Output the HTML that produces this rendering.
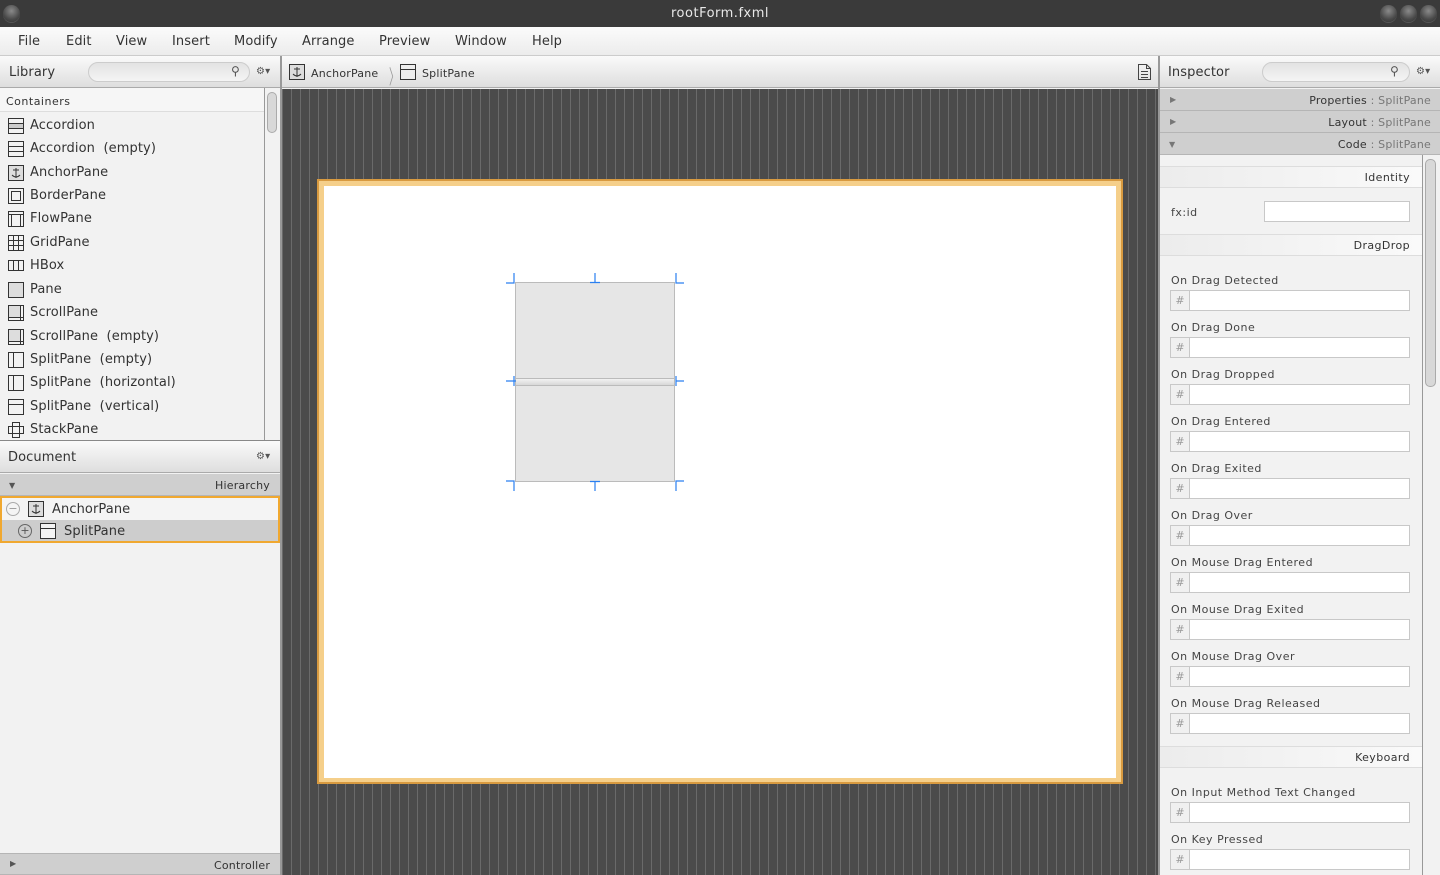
<!DOCTYPE html>
<html><head><meta charset="utf-8"><style>
*{box-sizing:border-box;margin:0;padding:0}
body{width:1440px;height:875px;overflow:hidden;background:#f2f2f2;font-family:"DejaVu Sans","Liberation Sans",sans-serif;font-size:12px;color:#333;position:relative}
.a{position:absolute}
.t{position:absolute;white-space:nowrap;letter-spacing:0.2px;margin-top:2px}
.hdr{background:linear-gradient(#fafafa,#dedede);border-bottom:1px solid #aaa}
.bar{background:#cfcfcf;border-bottom:1px solid #b5b5b5}
.search{position:absolute;height:20px;border:1px solid #ccc;border-radius:10px;background:linear-gradient(#e2e2e2,#f4f4f4)}
.inp{position:absolute;background:#fff;border:1px solid #c8c8c8}
.lbl{position:absolute;left:1171px;font-size:11px;letter-spacing:0.5px;color:#444;margin-top:1px}
.hs{position:absolute;left:1170px;width:240px;height:21px;border:1px solid #c8c8c8;background:#fff}
.hs:before{content:"#";position:absolute;left:0;top:0;width:18px;height:19px;background:#f0f0f0;border-right:1px solid #c8c8c8;color:#999;font-size:11px;text-align:center;line-height:19px}
.sec{position:absolute;left:1160px;width:262px;height:22px;background:linear-gradient(90deg,#ececec,#fafafa);border-top:1px solid #ddd;border-bottom:1px solid #ddd;text-align:right;padding-right:12px;line-height:22px;font-size:11px;letter-spacing:0.4px}
.wb{position:absolute;top:5px;width:17px;height:17px;border-radius:50%;background:radial-gradient(circle at 50% 35%,#8a8a8a,#4a4a4a 60%,#2e2e2e);box-shadow:0 1px 0 #555}
.li{font-size:13px;letter-spacing:0.1px}
</style></head><body>
<div class="a" style="left:0;top:0;width:1440px;height:27px;background:#3a3a3a"></div>
<div class="wb" style="left:3px"></div>
<div class="wb" style="left:1380px"></div>
<div class="wb" style="left:1400px"></div>
<div class="wb" style="left:1420px"></div>
<div class="t" style="left:0;width:1440px;top:4px;text-align:center;color:#e8e8e8;font-size:13px;letter-spacing:0.5px">rootForm.fxml</div>
<div class="a" style="left:0;top:27px;width:1440px;height:29px;background:linear-gradient(#fbfbfb,#ececec);border-bottom:1px solid #ccc"></div>
<div class="t li" style="left:18px;top:32px">File</div>
<div class="t li" style="left:66px;top:32px">Edit</div>
<div class="t li" style="left:116px;top:32px">View</div>
<div class="t li" style="left:172px;top:32px">Insert</div>
<div class="t li" style="left:234px;top:32px">Modify</div>
<div class="t li" style="left:302px;top:32px">Arrange</div>
<div class="t li" style="left:379px;top:32px">Preview</div>
<div class="t li" style="left:455px;top:32px">Window</div>
<div class="t li" style="left:532px;top:32px">Help</div>

<div class="a hdr" style="left:0;top:56px;width:281px;height:32px"></div>
<div class="t li" style="left:9px;top:63px">Library</div>
<div class="search" style="left:88px;top:62px;width:162px"></div>
<div class="t" style="left:231px;top:62px;font-size:12px;color:#555">&#9906;</div>
<div class="t" style="left:256px;top:64px;font-size:10px;color:#555">&#9881;&#9662;</div>
<div class="a" style="left:0;top:88px;width:264px;height:24px;background:#f6f6f6;border-bottom:1px solid #ddd"></div>
<div class="t" style="left:6px;top:93px;font-size:11px;letter-spacing:0.5px">Containers</div>
<div class="a" style="left:264px;top:88px;width:17px;height:352px;background:#f2f2f2;border-left:1px solid #999"></div>
<div class="a" style="left:267px;top:92px;width:10px;height:41px;border-radius:5px;background:#d8d8d8;border:1px solid #aaa"></div>
<svg class="a" style="left:0;top:113px" width="264" height="328" fill="none" stroke="#333" stroke-width="1">
<g transform="translate(8,5)"><rect x=".5" y=".5" width="15" height="15"/><path d="M1 5.5h14M1 10.5h14"/><rect x="1" y="6" width="14" height="4" fill="#ccc" stroke="none"/></g>
<g transform="translate(8,28)"><rect x=".5" y=".5" width="15" height="15"/><path d="M1 5.5h14M1 10.5h14"/></g>
<g transform="translate(8,52)"><rect x=".5" y=".5" width="15" height="15" fill="#ddd"/><path d="M8 3v10M5 5h6M4 10q4 4 8 0"/></g>
<g transform="translate(8,75)"><rect x=".5" y=".5" width="15" height="15"/><rect x="3.5" y="3.5" width="9" height="9"/></g>
<g transform="translate(8,98)"><rect x=".5" y=".5" width="15" height="15"/><path d="M1 3.5h14M3.5 4v11M12.5 4v11"/></g>
<g transform="translate(8,122)"><rect x=".5" y=".5" width="15" height="15"/><path d="M5.5 1v14M10.5 1v14M1 5.5h14M1 10.5h14"/></g>
<g transform="translate(8,145)"><rect x=".5" y="2.5" width="15" height="10"/><path d="M5.5 3v9M10.5 3v9"/></g>
<g transform="translate(8,169)"><rect x=".5" y=".5" width="15" height="15" fill="#ddd"/></g>
<g transform="translate(8,192)"><rect x=".5" y=".5" width="15" height="15"/><rect x="1" y="1" width="11" height="11" fill="#ddd" stroke="none"/><path d="M12.5 1v14M1 12.5h14"/></g>
<g transform="translate(8,216)"><rect x=".5" y=".5" width="15" height="15"/><rect x="1" y="1" width="11" height="11" fill="#ddd" stroke="none"/><path d="M12.5 1v14M1 12.5h14"/></g>
<g transform="translate(8,239)"><rect x=".5" y=".5" width="15" height="15"/><path d="M5.5 1v14"/></g>
<g transform="translate(8,262)"><rect x=".5" y=".5" width="15" height="15"/><path d="M5.5 1v14"/></g>
<g transform="translate(8,286)"><rect x=".5" y=".5" width="15" height="15"/><path d="M1 5.5h14"/></g>
<g transform="translate(8,309)"><rect x="4.5" y=".5" width="7" height="15"/><rect x=".5" y="4.5" width="15" height="7"/></g>
</svg>
<div class="t li" style="left:30px;top:116px">Accordion</div>
<div class="t li" style="left:30px;top:139px">Accordion &nbsp;(empty)</div>
<div class="t li" style="left:30px;top:163px">AnchorPane</div>
<div class="t li" style="left:30px;top:186px">BorderPane</div>
<div class="t li" style="left:30px;top:209px">FlowPane</div>
<div class="t li" style="left:30px;top:233px">GridPane</div>
<div class="t li" style="left:30px;top:256px">HBox</div>
<div class="t li" style="left:30px;top:280px">Pane</div>
<div class="t li" style="left:30px;top:303px">ScrollPane</div>
<div class="t li" style="left:30px;top:327px">ScrollPane &nbsp;(empty)</div>
<div class="t li" style="left:30px;top:350px">SplitPane &nbsp;(empty)</div>
<div class="t li" style="left:30px;top:373px">SplitPane &nbsp;(horizontal)</div>
<div class="t li" style="left:30px;top:397px">SplitPane &nbsp;(vertical)</div>
<div class="t li" style="left:30px;top:420px">StackPane</div>

<div class="a hdr" style="left:0;top:440px;width:281px;height:33px;border-top:1px solid #888"></div>
<div class="t li" style="left:8px;top:448px">Document</div>
<div class="t" style="left:256px;top:449px;font-size:10px;color:#555">&#9881;&#9662;</div>
<div class="a bar" style="left:0;top:474px;width:281px;height:22px"></div>
<div class="t" style="left:9px;top:479px;font-size:8px;color:#555">&#9660;</div>
<div class="t" style="left:215px;top:477px;font-size:11px">Hierarchy</div>
<div class="a" style="left:0;top:496px;width:280px;height:47px;border:2px solid #f0a830;background:#f4f4f4"></div>
<div class="a" style="left:2px;top:520px;width:276px;height:21px;background:#cdcdcd"></div>
<div class="a" style="left:6px;top:502px;width:14px;height:14px;border:1px solid #aaa;border-radius:50%;text-align:center;line-height:11px;color:#999;font-size:11px">−</div>
<div class="a" style="left:18px;top:524px;width:14px;height:14px;border:1px solid #666;border-radius:50%;text-align:center;line-height:11px;color:#555;font-size:11px">+</div>
<svg class="a" style="left:28px;top:501px" width="16" height="16" fill="none" stroke="#333"><rect x=".5" y=".5" width="15" height="15" fill="#ddd"/><path d="M8 3v10M5 5h6M4 10q4 4 8 0"/></svg>
<svg class="a" style="left:40px;top:523px" width="16" height="16" fill="none" stroke="#333"><rect x=".5" y=".5" width="15" height="15" fill="#f4f4f4"/><path d="M1 5.5h14"/></svg>
<div class="t li" style="left:52px;top:500px">AnchorPane</div>
<div class="t li" style="left:64px;top:522px">SplitPane</div>
<div class="a bar" style="left:0;top:853px;width:281px;height:22px;border-top:1px solid #b5b5b5"></div>
<div class="t" style="left:10px;top:857px;font-size:8px;color:#555">&#9654;</div>
<div class="t" style="left:214px;top:857px;font-size:11px">Controller</div>
<div class="a" style="left:280px;top:56px;width:2px;height:819px;background:#999"></div>

<div class="a hdr" style="left:282px;top:56px;width:877px;height:32px"></div>
<svg class="a" style="left:289px;top:64px" width="16" height="16" fill="none" stroke="#333"><rect x=".5" y=".5" width="15" height="15" fill="#ddd"/><path d="M8 3v10M5 5h6M4 10q4 4 8 0"/></svg>
<div class="t" style="left:311px;top:65px;font-size:11px">AnchorPane</div>
<div class="t" style="left:384px;top:59px;font-size:20px;color:#999;transform:scaleX(.5)">〉</div>
<svg class="a" style="left:400px;top:64px" width="16" height="16" fill="none" stroke="#333"><rect x=".5" y=".5" width="15" height="15" fill="#eee"/><path d="M1 5.5h14"/></svg>
<div class="t" style="left:422px;top:65px;font-size:11px">SplitPane</div>
<svg class="a" style="left:1136px;top:64px" width="16" height="17" fill="none" stroke="#444"><path d="M2.5 .5h8l4 4v11h-12z M10.5 .5v4h4 M5 7.5h7M5 10.5h7M5 13.5h7"/></svg>
<div class="a" style="left:282px;top:89px;width:877px;height:786px;background-color:#4b4b4b;background-image:repeating-linear-gradient(90deg,#6a6a6a 0 1px,transparent 1px 9px)"></div>
<div class="a" style="left:317px;top:179px;width:806px;height:605px;background:#f5cf8a;border:2px solid #d89a40"></div>
<div class="a" style="left:324px;top:186px;width:792px;height:592px;background:#fff"></div>
<div class="a" style="left:515px;top:282px;width:160px;height:200px;background:#e6e6e6;border:1px solid #bbb"></div>
<div class="a" style="left:515px;top:378px;width:160px;height:8px;background:linear-gradient(#f2f2f2,#d8d8d8);border:1px solid #bbb"></div>
<svg class="a" style="left:504px;top:271px" width="182" height="222" stroke="#2a7ff0" stroke-width="1.2" fill="none">
<path d="M10 2v10H2M172 2v10h8M10 220v-10H2M172 220v-10h8M91 2v10M86 11.5h10M91 220v-10M86 210.5h10M2 110h10M10 105v10M180 110h-8M172 105v10"/>
</svg>
<div class="a" style="left:1158px;top:56px;width:2px;height:819px;background:#999"></div>

<div class="a hdr" style="left:1160px;top:56px;width:280px;height:32px"></div>
<div class="t li" style="left:1168px;top:63px">Inspector</div>
<div class="search" style="left:1262px;top:62px;width:148px"></div>
<div class="t" style="left:1390px;top:62px;font-size:12px;color:#555">&#9906;</div>
<div class="t" style="left:1416px;top:64px;font-size:10px;color:#555">&#9881;&#9662;</div>
<div class="a bar" style="left:1160px;top:89px;width:280px;height:22px"></div>
<div class="a bar" style="left:1160px;top:111px;width:280px;height:22px"></div>
<div class="a bar" style="left:1160px;top:133px;width:280px;height:22px"></div>
<div class="t" style="left:1170px;top:93px;font-size:8px;color:#777">&#9654;</div>
<div class="t" style="left:1170px;top:115px;font-size:8px;color:#777">&#9654;</div>
<div class="t" style="left:1169px;top:138px;font-size:8px;color:#777">&#9660;</div>
<div class="t" style="right:9px;top:92px;font-size:11px">Properties <span style="color:#777">: SplitPane</span></div>
<div class="t" style="right:9px;top:114px;font-size:11px">Layout <span style="color:#777">: SplitPane</span></div>
<div class="t" style="right:9px;top:136px;font-size:11px">Code <span style="color:#777">: SplitPane</span></div>
<div class="a" style="left:1422px;top:155px;width:18px;height:720px;background:#f2f2f2;border-left:1px solid #999"></div>
<div class="a" style="left:1425px;top:159px;width:11px;height:228px;border-radius:5px;background:#d8d8d8;border:1px solid #aaa"></div>
<div class="sec" style="top:166px">Identity</div>
<div class="lbl" style="top:205px">fx:id</div>
<div class="inp" style="left:1264px;top:201px;width:146px;height:21px"></div>
<div class="sec" style="top:234px">DragDrop</div>
<div class="lbl" style="top:273px">On Drag Detected</div><div class="hs" style="top:290px"></div>
<div class="lbl" style="top:320px">On Drag Done</div><div class="hs" style="top:337px"></div>
<div class="lbl" style="top:367px">On Drag Dropped</div><div class="hs" style="top:384px"></div>
<div class="lbl" style="top:414px">On Drag Entered</div><div class="hs" style="top:431px"></div>
<div class="lbl" style="top:461px">On Drag Exited</div><div class="hs" style="top:478px"></div>
<div class="lbl" style="top:508px">On Drag Over</div><div class="hs" style="top:525px"></div>
<div class="lbl" style="top:555px">On Mouse Drag Entered</div><div class="hs" style="top:572px"></div>
<div class="lbl" style="top:602px">On Mouse Drag Exited</div><div class="hs" style="top:619px"></div>
<div class="lbl" style="top:649px">On Mouse Drag Over</div><div class="hs" style="top:666px"></div>
<div class="lbl" style="top:696px">On Mouse Drag Released</div><div class="hs" style="top:713px"></div>
<div class="sec" style="top:746px">Keyboard</div>
<div class="lbl" style="top:785px">On Input Method Text Changed</div><div class="hs" style="top:802px"></div>
<div class="lbl" style="top:832px">On Key Pressed</div><div class="hs" style="top:849px"></div>
</body></html>
